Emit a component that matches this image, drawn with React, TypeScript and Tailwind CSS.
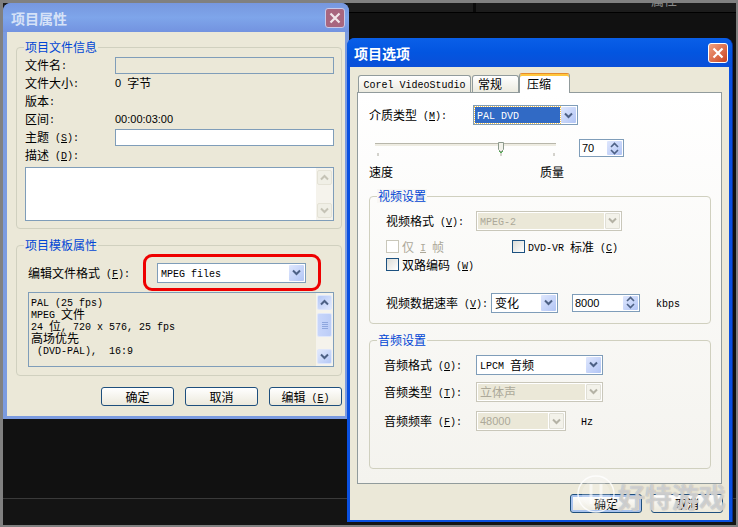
import { ReactNode } from "react";

// pt nudges the latin down so it lines up with the cjk glyphs
const MONO = "text-[10px] leading-[12px] pt-[4px] font-['Liberation_Mono',monospace]";

// simsun-ish text: latin is 6px wide, cjk 12px wide
function T({ children, sans }: { children: string; sans?: boolean }) {
  const parts = children.split(/([\u4e00-\u9fff]+)/).filter(Boolean);
  return (
    <span className="inline-flex items-center whitespace-pre leading-[12px]">
      {parts.map((p, i) =>
        /[\u4e00-\u9fff]/.test(p) ? (
          <span key={i} className="text-[12px] leading-[12px]">{p}</span>
        ) : (
          <span key={i} className={sans ? "text-[11px] leading-[12px] font-['Liberation_Sans',sans-serif]" : MONO}>{p}</span>
        )
      )}
    </span>
  );
}

function Label({ text, hot, after = "" }: { text: string; hot?: string; after?: string }) {
  return (
    <span className="inline-flex items-center whitespace-pre leading-[12px]">
      <T>{text}</T>
      {hot && (
        <span className={MONO}>
          {" ("}<u>{hot}</u>{")"}{after}
        </span>
      )}
    </span>
  );
}

function Chevron({ color = "#4d6185" }: { color?: string }) {
  return (
    <svg width="9" height="7" viewBox="0 0 9 7">
      <path d="M1 1.5 L4.5 5 L8 1.5" fill="none" stroke={color} strokeWidth="2" />
    </svg>
  );
}

function Select({ value, className, disabled, focused, mono = true }: { value: string; className: string; disabled?: boolean; focused?: boolean; mono?: boolean }) {
  return (
    <div className={`${className} flex shrink-0 p-px border ${disabled ? "border-[#c9c7ba] bg-white" : "border-[#7f9db9] bg-white"}`}>
      <div className={`flex-1 min-w-0 flex items-center whitespace-pre pl-[2px] ${disabled ? "bg-[#ebe8d8] text-[#aca899]" : ""} ${focused ? "bg-[#316ac5] text-white outline outline-1 outline-dotted outline-[#f5c04a]" : ""}`}>
        {mono ? <T>{value}</T> : <T sans>{value}</T>}
      </div>
      <div className={`w-[15px] ml-px flex items-center justify-center rounded-[1px] ${disabled ? "bg-[#f3f2ea] border border-[#e0dfd5]" : "bg-gradient-to-br from-[#dfe7fd] to-[#b2c5f5]"}`}>
        <Chevron color={disabled ? "#b4b2a5" : "#4d6185"} />
      </div>
    </div>
  );
}

function Spin({ value, className }: { value: string; className: string }) {
  return (
    <div className={`${className} flex shrink-0 p-px border border-[#7f9db9] bg-white`}>
      <div className="flex-1 flex items-center pl-[1px]"><T sans>{value}</T></div>
      <div className="w-[15px] flex items-center justify-center bg-gradient-to-br from-[#dfe7fd] to-[#b2c5f5] rounded-[1px]">
        <svg width="9" height="13" viewBox="0 0 9 13">
          <path d="M1 5 L4.5 1.5 L8 5 M1 8 L4.5 11.5 L8 8" fill="none" stroke="#4d6185" strokeWidth="1.6" />
        </svg>
      </div>
    </div>
  );
}

function Group({ title, className, children }: { title: string; className: string; children: ReactNode }) {
  return (
    <div className={`${className} relative border border-[#d0d0bf] rounded-[4px]`}>
      <div className="absolute left-[7px] top-[-8px] bg-[#ebe8d8] px-px text-[#0046d5] text-[12px] leading-[14px]">{title}</div>
      {children}
    </div>
  );
}

function PanelGroup({ title, className, children }: { title: string; className: string; children: ReactNode }) {
  return (
    <div className={`${className} relative border border-[#d0d0bf] rounded-[4px]`}>
      <div className="absolute left-[7px] top-[-8px] bg-[#f8f7f4] px-px text-[#0046d5] text-[12px] leading-[14px]">{title}</div>
      {children}
    </div>
  );
}

function Button({ children, className = "w-[73px]", focused }: { children: ReactNode; className?: string; focused?: boolean }) {
  return (
    <div className={`${className} h-[19px] shrink-0 flex items-center justify-center rounded-[3px] border border-[#1e4f7d] bg-gradient-to-b from-white to-[#ece9dc] whitespace-pre ${focused ? "shadow-[inset_0_0_0_2px_#a9c3ee]" : ""}`}>
      {children}
    </div>
  );
}

function Check({ disabled }: { disabled?: boolean }) {
  return (
    <div className={`w-[13px] h-[13px] shrink-0 border ${disabled ? "border-[#c9c7ba] bg-white" : "border-[#1c5180] bg-gradient-to-br from-[#dcdcd7] to-white"}`} />
  );
}

function Close({ active }: { active?: boolean }) {
  return (
    <div className={`absolute top-[5px] right-[4px] w-[20px] h-[20px] rounded-[3px] flex items-center justify-center ${active ? "bg-gradient-to-br from-[#f0a080] to-[#c8401a] border border-white" : "bg-[#a8667f] border border-[#c9c9e8]"}`}>
      <svg width="12" height="12" viewBox="0 0 12 12">
        <path d="M1.5 1.5 L10.5 10.5 M10.5 1.5 L1.5 10.5" stroke={active ? "#fff" : "#f2e6ea"} strokeWidth="2.2" />
      </svg>
    </div>
  );
}

function Scrollbar({ active }: { active?: boolean }) {
  const btn = active ? "bg-gradient-to-br from-[#e1e9fd] to-[#b5c8f6] border-[#dfe7fb]" : "bg-[#f0efe6] border-[#e4e2d6]";
  const c = active ? "#4d6185" : "#c5c3b6";
  return (
    <div className="w-[17px] h-full bg-[#f5f3ec] flex flex-col items-center py-[2px] shrink-0">
      <div className={`w-[15px] h-[15px] border rounded-[2px] flex items-center justify-center rotate-180 ${btn}`}><Chevron color={c} /></div>
      {active && (
        <div className="w-[15px] h-[24px] mt-[3px] border border-[#dfe7fb] rounded-[2px] bg-gradient-to-r from-[#c8d6fb] to-[#bccdf7] flex flex-col items-center justify-center gap-px">
          <div className="w-[6px] h-px bg-[#8ea6de]" />
          <div className="w-[6px] h-px bg-[#8ea6de]" />
          <div className="w-[6px] h-px bg-[#8ea6de]" />
          <div className="w-[6px] h-px bg-[#8ea6de]" />
        </div>
      )}
      <div className="flex-1" />
      <div className={`w-[15px] h-[15px] border rounded-[2px] flex items-center justify-center ${btn}`}><Chevron color={c} /></div>
    </div>
  );
}

function Row({ className, children }: { className: string; children: ReactNode }) {
  return <div className={`${className} flex items-center`}>{children}</div>;
}

export default function App() {
  return (
    <div className="relative w-[738px] h-[527px] overflow-hidden bg-[#111111] border-[#808080] border-t-[3px] border-l-[3px] border-r-[2px] border-b-[2px] flex flex-col text-black font-['Noto_Sans_CJK_SC','Liberation_Sans',sans-serif] text-[12px]">
      {/* app behind the dialogs */}
      <div className="h-[10px] shrink-0 bg-[#1c1c1c] border-b border-black flex justify-end">
        <div className="w-[263px] border-l-[3px] border-[#0a0a0a] overflow-hidden relative">
          <span className="absolute left-[175px] top-[-10px] text-[#8a8a8a] text-[13px] leading-[14px]">属性</span>
        </div>
      </div>
      <div className="flex-1" />
      <div className="h-[27px] shrink-0 border-t border-[#3a3a3a] bg-[#141414]" />

      {/* left dialog */}
      <div className="absolute left-0 top-0 w-[346px] h-[416px] rounded-t-[8px] bg-[#7b9be0] flex flex-col">
        <div className="relative h-[29px] shrink-0 rounded-t-[8px] bg-gradient-to-b from-[#7797df] via-[#7ea5ea] to-[#7393e0] flex items-center pl-[8px]">
          <span className="text-[14px] font-bold text-[#d6e2f7] leading-none">项目属性</span>
          <Close />
        </div>
        <div className="mx-[4px] h-[384px] bg-[#ebe8d8]">
          <Group title="项目文件信息" className="ml-[9px] mt-[15px] w-[326px] h-[182px] pt-[8px] pl-[8px]">
            <Row className="h-[18px]">
              <div className="w-[90px]"><Label text="文件名:" /></div>
              <div className="w-[219px] h-[17px] border border-[#7f9db9] bg-[#ebe8d8]" />
            </Row>
            <Row className="h-[18px]">
              <div className="w-[90px]"><Label text="文件大小:" /></div>
              <T sans>{"0  "}</T><T>字节</T>
            </Row>
            <Row className="h-[18px]"><Label text="版本:" /></Row>
            <Row className="h-[18px]">
              <div className="w-[90px]"><Label text="区间:" /></div>
              <T sans>00:00:03:00</T>
            </Row>
            <Row className="h-[18px]">
              <div className="w-[90px]"><Label text="主题" hot="S" after=":" /></div>
              <div className="w-[219px] h-[17px] border border-[#7f9db9] bg-white" />
            </Row>
            <Row className="h-[18px]"><Label text="描述" hot="D" after=":" /></Row>
            <div className="mt-[3px] w-[309px] h-[54px] border border-[#7f9db9] bg-white flex justify-end">
              <Scrollbar />
            </div>
          </Group>
          <Group title="项目模板属性" className="ml-[9px] mt-[16px] w-[326px] h-[131px] pt-[17px] pl-[11px]">
            <Row className="h-[19px]">
              <div className="w-[129px]"><Label text="编辑文件格式" hot="F" after=":" /></div>
              <Select value="MPEG files" className="w-[149px] h-[20px]" />
            </Row>
            <div className="mt-[10px] w-[306px] h-[75px] border border-[#7f9db9] flex justify-between">
              <div className="pl-[2px] pt-[3px]">
                <div className="h-[12px] flex items-center"><T>PAL (25 fps)</T></div>
                <div className="h-[12px] flex items-center"><T>MPEG 文件</T></div>
                <div className="h-[12px] flex items-center"><T>24 位, 720 x 576, 25 fps</T></div>
                <div className="h-[12px] flex items-center"><T>高场优先</T></div>
                <div className="h-[12px] flex items-center"><T> (DVD-PAL),  16:9</T></div>
              </div>
              <Scrollbar active />
            </div>
            {/* red highlight */}
            <div className="absolute left-[126px] top-[8px] w-[178px] h-[37px] border-[3px] border-[#ee0000] rounded-[9px]" />
          </Group>
          <div className="mt-[11px] ml-[94px] flex gap-[11px]">
            <Button><T>确定</T></Button>
            <Button><T>取消</T></Button>
            <Button><Label text="编辑" hot="E" /></Button>
          </div>
        </div>
      </div>

      {/* right dialog */}
      <div className="absolute left-[344px] top-[35px] w-[386px] h-[484px] rounded-t-[8px] bg-[#0a50e0] border-r border-[#0a2f90] flex flex-col">
        <div className="relative h-[29px] shrink-0 rounded-t-[8px] bg-gradient-to-b from-[#0a5fe8] via-[#0355e0] to-[#0a4fd8] flex items-center pl-[7px]">
          <span className="text-[14px] font-bold text-white leading-none">项目选项</span>
          <Close active />
        </div>
        <div className="mx-[3px] h-[453px] bg-[#ebe8d8] pt-[6px]">
          <div className="ml-[8px] h-[19px] flex items-end">
            <div className="w-[113px] h-[17px] border border-b-0 border-[#919b9c] rounded-t-[3px] bg-gradient-to-b from-white to-[#ecebe0] flex items-center justify-center"><T>Corel VideoStudio</T></div>
            <div className="ml-px w-[47px] h-[17px] border border-b-0 border-[#919b9c] rounded-t-[3px] bg-gradient-to-b from-white to-[#ecebe0] flex items-center pl-[5px]"><T>常规</T></div>
            <div className="relative z-10 -mb-px w-[51px] h-[20px] border border-b-0 border-[#919b9c] border-t-[#e68b2c] rounded-t-[3px] bg-white flex items-center pl-[7px] shadow-[inset_0_2px_0_#ffc73c]"><T>压缩</T></div>
          </div>
          <div className="ml-[7px] w-[365px] h-[392px] border border-[#919b9c] bg-gradient-to-b from-white to-[#f4f3ee]">
            <Row className="mt-[12px] ml-[11px] h-[20px]">
              <div className="w-[104px]"><Label text="介质类型" hot="M" after=":" /></div>
              <Select value="PAL DVD" className="w-[105px] h-[20px]" focused />
            </Row>
            <div className="mt-[14px] ml-[14px] flex h-[18px]">
              <svg width="189" height="18" viewBox="0 0 189 18" className="shrink-0">
                <rect x="3" y="5" width="181" height="2" fill="#eeece2" />
                <path d="M3 4.5h181" stroke="#b8b7ab" />
                <path d="M6 14v3M129 14v3M182 14v3" stroke="#aaa89c" />
                <path d="M126.5 3.5h5v7l-2.5 2.5l-2.5-2.5z" fill="#f2f2ea" stroke="#8d9a8d" />
                <path d="M127 12l2 2l2-2" fill="none" stroke="#4fb04f" />
              </svg>
              <Spin value="70" className="ml-[18px] w-[45px] h-[18px]" />
            </div>
            <div className="mt-[8px] ml-[11px] h-[14px] flex items-center">
              <span className="w-[171px] flex"><T>速度</T></span>
              <T>质量</T>
            </div>
            <PanelGroup title="视频设置" className="mt-[17px] ml-[11px] w-[342px] h-[128px] pt-[14px] pl-[16px]">
              <Row className="h-[19px]">
                <div className="w-[90px]"><Label text="视频格式" hot="V" after=":" /></div>
                <Select value="MPEG-2" className="w-[146px] h-[20px]" disabled />
              </Row>
              <Row className="mt-[10px] h-[13px]">
                <div className="w-[126px] flex items-center">
                  <Check disabled />
                  <span className="ml-[3px] text-[#aca899] flex items-center whitespace-pre"><T>仅 </T><u className={MONO}>I</u><T> 帧</T></span>
                </div>
                <Check />
                <span className="ml-[3px] flex items-center"><Label text="DVD-VR 标准" hot="C" /></span>
              </Row>
              <Row className="mt-[5px] h-[13px]">
                <Check />
                <span className="ml-[3px] flex items-center"><Label text="双路编码" hot="W" /></span>
              </Row>
              <Row className="mt-[22px] h-[19px]">
                <div className="w-[105px]"><Label text="视频数据速率" hot="V" after=":" /></div>
                <Select value="变化" className="w-[67px] h-[20px]" />
                <Spin value="8000" className="ml-[14px] w-[68px] h-[18px]" />
                <span className="ml-[16px] flex"><T>kbps</T></span>
              </Row>
            </PanelGroup>
            <PanelGroup title="音频设置" className="mt-[16px] ml-[11px] w-[342px] h-[129px] pt-[14px] pl-[14px]">
              <Row className="h-[19px]">
                <div className="w-[92px]"><Label text="音频格式" hot="O" after=":" /></div>
                <Select value="LPCM 音频" className="w-[127px] h-[20px]" />
              </Row>
              <Row className="mt-[8px] h-[19px]">
                <div className="w-[92px]"><Label text="音频类型" hot="T" after=":" /></div>
                <Select value="立体声" className="w-[127px] h-[20px]" disabled />
              </Row>
              <Row className="mt-[10px] h-[20px]">
                <div className="w-[92px]"><Label text="音频频率" hot="F" after=":" /></div>
                <Select value="48000" mono={false} className="w-[90px] h-[20px]" disabled />
                <span className="ml-[15px] flex"><T>Hz</T></span>
              </Row>
            </PanelGroup>
          </div>
          <div className="mt-[10px] ml-[220px] flex gap-[9px]">
            <Button className="w-[72px]" focused><T>确定</T></Button>
            <Button className="w-[72px]"><T>取消</T></Button>
          </div>
        </div>
      </div>

      {/* watermark */}
      <div className="absolute left-[574px] top-[472px] flex items-center pointer-events-none">
        <svg width="38" height="38" viewBox="0 0 38 38">
          <circle cx="19" cy="19" r="18" fill="none" stroke="#fff" strokeWidth="1.5" opacity="0.8" />
          <circle cx="19" cy="19" r="14" fill="#fff" opacity="0.2" />
          <path d="M14 9v20M24 9v20" stroke="#fff" strokeWidth="3" opacity="0.6" />
        </svg>
        <span className="ml-[3px] mt-[4px] text-[27px] leading-none font-bold text-white/50 whitespace-pre [text-shadow:0_0_1px_#999]">好特游戏</span>
      </div>
    </div>
  );
}
